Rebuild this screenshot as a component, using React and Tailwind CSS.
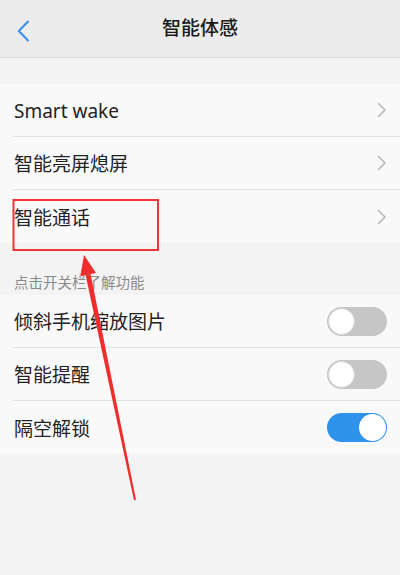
import { Fragment } from 'react'

const font = { fontFamily: '"Noto Sans", "Noto Sans CJK SC", sans-serif' }

function Chevron() {
  return (
    <svg width="10" height="16" viewBox="0 0 10 16" fill="none">
      <path d="M1.5 1.5L8 8l-6.5 6.5" stroke="#b8b8b8" strokeWidth="1.6" strokeLinecap="round" strokeLinejoin="round" />
    </svg>
  )
}

function Toggle({ on }) {
  return on ? (
    <div className="w-[60px] h-[29px] rounded-full bg-[#2f93ee] flex items-center justify-end pr-[1px]">
      <div className="w-[27px] h-[27px] rounded-full bg-white" />
    </div>
  ) : (
    <div className="w-[60px] h-[29px] rounded-full bg-[#c6c6c6] flex items-center pl-[1px]">
      <div className="w-[27px] h-[27px] rounded-full bg-white border border-[#d2d2d2]" />
    </div>
  )
}

function Row({ label, last, right }) {
  return (
    <div className="pl-[13px] bg-[#f9f9f9]">
      <div className={`h-[53px] flex items-center justify-between pr-[13px] ${last ? '' : 'border-b border-[#e2e2e2]'}`}>
        <span className="text-[19px] text-[#222] leading-none pl-[1px] pt-[3px]">{label}</span>
        {right}
      </div>
    </div>
  )
}

export default function App() {
  const links = ['Smart wake', '智能亮屏熄屏', '智能通话']
  const toggles = [
    { label: '倾斜手机缩放图片', on: false },
    { label: '智能提醒', on: false },
    { label: '隔空解锁', on: true },
  ]

  return (
    <div className="relative w-[400px] h-[575px] bg-[#f3f3f3] overflow-hidden" style={font}>
      <header className="relative h-[58px] bg-[#ececec] border-b border-[#dcdcdc] flex items-center justify-center">
        <svg className="absolute left-[17px] top-[20px]" width="13" height="22" viewBox="0 0 13 22" fill="none">
          <path d="M11 1.5L1.8 11l9.2 9.5" stroke="#3a8fe8" strokeWidth="2" strokeLinecap="round" strokeLinejoin="round" />
        </svg>
        <h1 className="text-[19px] text-[#1a1a1a] font-medium">智能体感</h1>
      </header>

      <div className="h-[26px]" />

      <div>
        {links.map((l, i) => (
          <Row key={l} label={l} last={i === links.length - 1} right={<Chevron />} />
        ))}
      </div>

      <div className="h-[52px] pt-[29px] pl-[14px] text-[14.5px] leading-[20px] text-[#8a8a8a]">点击开关栏了解功能</div>

      <div>
        {toggles.map((t, i) => (
          <Fragment key={t.label}>
            <Row label={t.label} last={i === toggles.length - 1} right={<Toggle on={t.on} />} />
          </Fragment>
        ))}
      </div>

      {/* annotation overlay */}
      <svg className="absolute inset-0 pointer-events-none" width="400" height="575" viewBox="0 0 400 575">
        <rect x="13.5" y="200" width="144.5" height="50" fill="none" stroke="#ef3636" strokeWidth="2" />
        <polygon points="84,255 96,273 80.3,276.2" fill="#f02d2d" />
        <polygon points="85.6,275.1 90.6,274.1 136,499.8 134,500.2" fill="#f02d2d" />
      </svg>
    </div>
  )
}
